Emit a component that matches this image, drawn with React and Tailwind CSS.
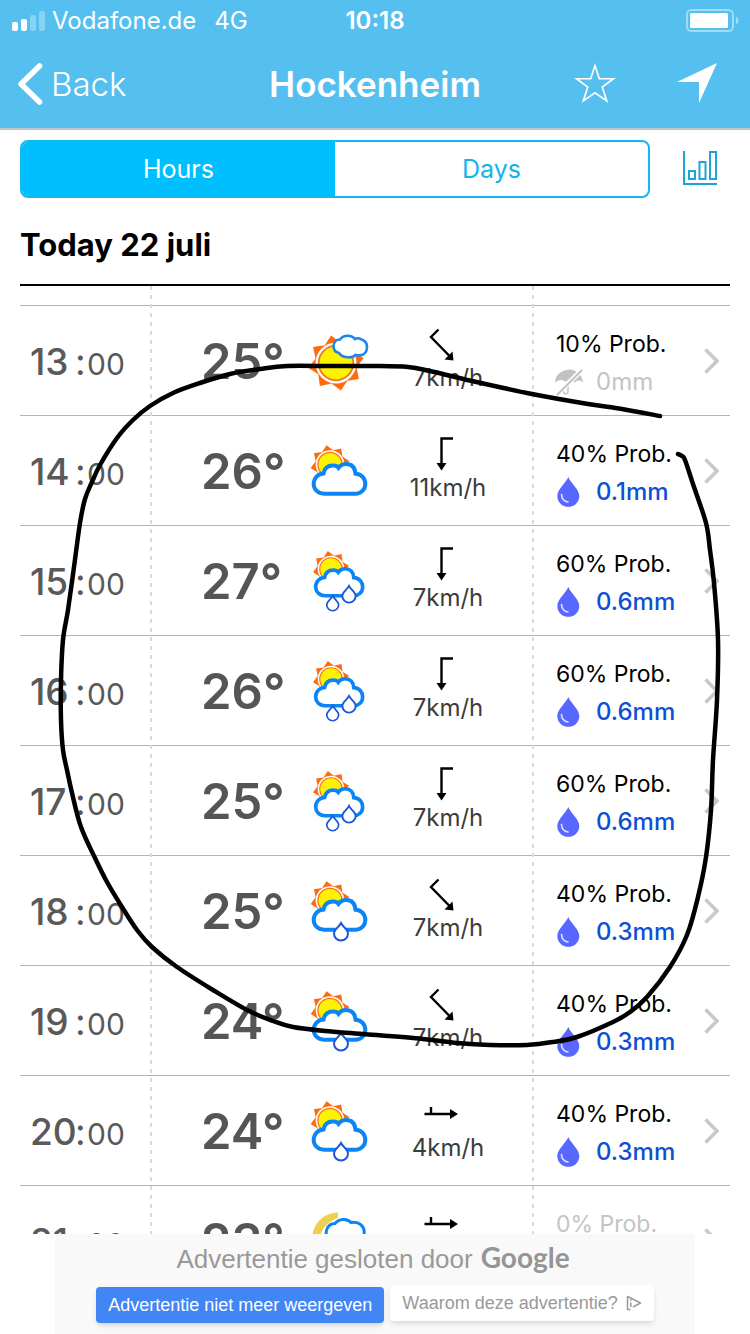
import React from "react";

const hours = [
  { hour: "13", temp: 25, sky: "sunny", wind: "southeast", speed: 7, prob: 10, rain: "0" },
  { hour: "14", temp: 26, sky: "cloudy", wind: "south", speed: 11, prob: 40, rain: "0.1" },
  { hour: "15", temp: 27, sky: "showers", wind: "south", speed: 7, prob: 60, rain: "0.6" },
  { hour: "16", temp: 26, sky: "showers", wind: "south", speed: 7, prob: 60, rain: "0.6" },
  { hour: "17", temp: 25, sky: "showers", wind: "south", speed: 7, prob: 60, rain: "0.6" },
  { hour: "18", temp: 25, sky: "drizzle", wind: "southeast", speed: 7, prob: 40, rain: "0.3" },
  { hour: "19", temp: 24, sky: "drizzle", wind: "southeast", speed: 7, prob: 40, rain: "0.3" },
  { hour: "20", temp: 24, sky: "drizzle", wind: "east", speed: 4, prob: 40, rain: "0.3" },
  { hour: "21", temp: 23, sky: "night", wind: "east", speed: 4, prob: 0, rain: "0" },
];

const markerPoints = [
  [660, 416], [622, 409], [588, 404], [532, 394], [472, 381], [430, 371], [408, 367], [375, 366],
  [330, 366], [287, 366], [260, 369], [230, 374], [200, 383], [173, 393], [150, 406], [133, 420],
  [117, 438], [100, 465], [92, 482], [85, 499], [80, 523], [74, 567], [68, 610], [63, 640],
  [61, 680], [61, 720], [63, 750], [67, 770], [72, 793], [81, 827], [95, 858],
  [107, 882], [122, 907], [137, 930], [152, 947], [177, 967], [213, 990], [247, 1010], [273, 1021],
  [293, 1027], [325, 1031], [363, 1034], [423, 1039], [457, 1043], [490, 1045], [527, 1045], [553, 1042],
  [577, 1037], [613, 1022], [630, 1012], [647, 997], [670, 967], [687, 935], [698, 897], [706, 857],
  [711, 810], [713, 760], [717, 700], [718, 640], [714, 583], [710, 550], [706, 523], [693, 484],
  [685, 460], [682, 456], [678, 454],
];

// Catmull-Rom spline through the points, written as cubic segments.
function smoothPath(points) {
  let d = `M${points[0].join(" ")}`;
  for (let i = 0; i < points.length - 1; i++) {
    const p0 = points[i - 1] || points[i];
    const p1 = points[i];
    const p2 = points[i + 1];
    const p3 = points[i + 2] || p2;
    const c = [0, 1].map((k) => p1[k] + (p2[k] - p0[k]) / 6);
    const e = [0, 1].map((k) => p2[k] - (p3[k] - p1[k]) / 6);
    d += `C${c.join(" ")} ${e.join(" ")} ${p2.join(" ")}`;
  }
  return d;
}

const sunRays = Array.from({ length: 16 }, (_, i) => {
  const angle = ((-100 + i * 22.5) * Math.PI) / 180;
  const radius = i % 2 ? 21 : 28;
  return `${(Math.cos(angle) * radius).toFixed(1)},${(Math.sin(angle) * radius).toFixed(1)}`;
}).join(" ");

function Sun({ transform }) {
  return (
    <g transform={transform}>
      <polygon points={sunRays} fill="#ff6a0a" />
      <circle r="20.5" fill="#fff" />
      <circle r="18.200" fill="#f5731a" />
      <circle r="16.400" fill="#fff200" />
    </g>
  );
}

function Cloud({ transform }) {
  return (
    <path
      transform={transform}
      d="M17 54.7C10.5 54.7 6.7 50 6.7 45C6.7 39 11 34.8 16.5 34.5C17.5 29 21 26.5 26 26.5C28.5 26.5 30.5 27.3 31.5 28.8C33.5 26 36.5 25 39 25C44.5 25 48 28.5 48.5 34.7C54.5 35 58.3 39.5 58.3 45C58.3 50.5 54 54.7 48.5 54.7Z"
      fill="#fff"
      stroke="#0b84f6"
      strokeWidth="4"
    />
  );
}

function RainDrop({ transform }) {
  return (
    <path
      transform={transform}
      d="M0 -9C2 -5 7 -2.5 7 1.5A7 7 0 0 1 -7 1.5C-7 -2.5 -2 -5 0 -9Z"
      fill="#fff"
      stroke="#1a56dc"
      strokeWidth="2"
    />
  );
}

function Sky({ kind }) {
  return (
    <svg viewBox="0 0 64 64" className="mx-auto block size-16" role="img" aria-label={kind}>
      {kind === "sunny" && (
        <>
          <Sun transform="translate(29 34)" />
          <path
            d="M32 24C28 23 26.5 20 26.5 17.5C26.5 13 29.5 10.5 33 10.5C35 7.5 38 6.7 41 6.7C44 6.7 46.5 8 48 10C50 9 52.5 9.2 54.5 10.5C58 11.5 60 14.5 60 18C60 22.5 57.5 26 53 26.3C51 26.7 49.5 26 48.5 25.8C46.5 28 44 28.5 41.5 28.3C37 28.3 34 27 32 24Z"
            fill="#fff"
            stroke="#1a86ee"
            strokeWidth="2.6"
          />
        </>
      )}
      {kind === "cloudy" && (
        <>
          <Sun transform="translate(23 25.5) scale(.7)" />
          <Cloud />
        </>
      )}
      {kind === "drizzle" && (
        <>
          <Sun transform="translate(23 21.5) scale(.7)" />
          <Cloud transform="translate(0 -4)" />
          <RainDrop transform="translate(34 53)" />
        </>
      )}
      {kind === "showers" && (
        <>
          <Sun transform="translate(24 20) scale(.65)" />
          <Cloud transform="translate(2.6 -3) scale(.91)" />
          <RainDrop transform="translate(42 45.5) scale(.95)" />
          <RainDrop transform="translate(25.7 54.5) scale(.85)" />
        </>
      )}
      {kind === "night" && (
        <>
          <path d="M31 3.5C16 3.5 5 16 5 31C5 43 14 53 26 55C17 48 13 40 13 31C13 21 20 13 31 9Z" fill="#efd04e" />
          <path
            d="M26 47C15 46 14 33 21 30C17 24 20 14.500 28 14.500C32 9.500 40 9 44 13.500C52 12 58.500 17 57 26C64 32 60 46 50 47Z"
            fill="#fff"
            stroke="#0b84f6"
            strokeWidth="3"
          />
        </>
      )}
    </svg>
  );
}

const windShapes = {
  south: { line: "M29 4.500H17.500V30", head: "M12.500 29H22.500L17.500 36.500Z" },
  southeast: { line: "M14.500 5.500L7 13L26 32.500", head: "M29.500 36.500L28.500 27.500L20.500 35.500Z" },
  east: { line: "M0.500 20H28M7 13V20", head: "M26 15L34 20L26 25Z" },
};

function WindArrow({ direction }) {
  const shape = windShapes[direction];
  return (
    <svg viewBox="0 0 48 40" className="mx-auto block h-10 w-12" role="img" aria-label={`Wind ${direction}`}>
      <path d={shape.line} fill="none" stroke="#000" strokeWidth="2.4" />
      <path d={shape.head} />
    </svg>
  );
}

function PrecipitationIcon({ dry }) {
  return dry ? (
    <svg viewBox="0 0 30 30" className="block size-[30px]" aria-hidden="true">
      <path d="M1 16C1 8 7.500 3 15 2.500C22 3 28.500 7.500 29 15.500C26 12.500 23 13 20.500 15.500C18 13 15 12.500 11.500 15C8 12 4 12.500 1 16Z" fill="#c2c2c2" />
      <path d="M14 14V24C14 28 9 27.500 9.500 24" fill="none" stroke="#c2c2c2" strokeWidth="1.500" />
      <path d="M2 28L29 2" stroke="#fff" strokeWidth="5" />
      <path d="M3 28L28 3" stroke="#c2c2c2" strokeWidth="2" />
    </svg>
  ) : (
    <svg viewBox="0 0 30 30" className="block size-[30px]" aria-hidden="true">
      <path d="M14.300 0C16.500 6 25.300 12 25.300 19A11 10.800 0 0 1 3.300 19C3.300 12 12 6 14.300 0Z" fill="#5867ff" />
      <path d="M7.500 17.500C7.800 22 10 24.500 14 25" fill="none" stroke="#dfe3ff" strokeWidth="1.600" strokeLinecap="round" />
    </svg>
  );
}

function HourRow({ item }) {
  const dry = item.rain === "0";
  return (
    <tr className="h-[110px] [&>*]:border-b [&>*]:border-[#b4b4b4] [&>*]:p-0">
      <th scope="row" className="text-left font-normal text-[#595959]">
        <div className="flex items-baseline pt-0.5 pl-2.5 text-[37px]">
          <span className="w-[45px] font-medium">{item.hour}</span>
          <span className="w-3">:</span>
          <span className="text-[30px]">00</span>
        </div>
      </th>
      <td className="text-[49px] font-semibold text-[#555]">
        <div className="pt-0.5 pl-[50px]">{item.temp}°</div>
      </td>
      <td>
        <Sky kind={item.sky} />
      </td>
      <td>
        <div className="pb-1.5 text-center text-2xl leading-7 text-[#3c3c3c]">
          <WindArrow direction={item.wind} />
          {item.speed}km/h
        </div>
      </td>
      <td>
        <div className="pt-1 pl-10">
          <div className={item.prob ? "pl-0.5 text-[23px] leading-[38px] whitespace-nowrap text-black" : "pl-0.5 text-[23px] leading-[38px] whitespace-nowrap text-[#c4c4c4]"}>
            {item.prob}% Prob.
          </div>
          <div className="flex h-[38px] items-center gap-3 text-2xl">
            <PrecipitationIcon dry={dry} />
            <span className={dry ? "text-[#c4c4c4]" : "font-medium text-[#0f4fd6]"}>{item.rain}mm</span>
          </div>
        </div>
      </td>
      <td>
        <a href={`#hour-${item.hour}`} aria-label={`Details ${item.hour}:00`} className="flex justify-end pr-2.5">
          <svg viewBox="0 0 16 26" className="h-[26px] w-4" fill="none" stroke="#c7c7cc" strokeWidth="3.500">
            <path d="M1.500 1.500L13 13L1.500 24.500" />
          </svg>
        </a>
      </td>
    </tr>
  );
}

function StatusBar() {
  return (
    <div className="grid h-10 grid-cols-[1fr_auto_1fr] items-center pt-px text-2xl">
      <div className="flex items-center pl-3">
        <svg viewBox="0 0 34 20" className="mr-1.5 h-5 w-[34px]" fill="#fff" aria-hidden="true">
          <rect x="0" y="11" width="6" height="9" rx="2" />
          <rect x="9" y="8" width="6" height="12" rx="2" />
          <rect x="18" y="4" width="6" height="16" rx="2" opacity=".3" />
          <rect x="27" y="0" width="6" height="20" rx="2" opacity=".3" />
        </svg>
        <span className="mr-[18px]">Vodafone.de</span>
        <span>4G</span>
      </div>
      <span className="font-semibold">10:18</span>
      <svg viewBox="0 0 54 24" className="mr-2.5 h-6 w-[54px] justify-self-end" fill="none" role="img" aria-label="Battery">
        <rect x="1" y="1" width="46" height="21" rx="4.500" stroke="#fff" strokeWidth="2" opacity=".45" />
        <rect x="4" y="4" width="38" height="15" rx="1.500" fill="#fff" />
        <path d="M50 7.500C53.500 9 53.500 14 50 15.500Z" fill="#fff" opacity=".45" />
      </svg>
    </div>
  );
}

function NavBar() {
  return (
    <div className="grid h-[88px] grid-cols-[1fr_auto_1fr] items-center">
      <button type="button" className="flex items-center gap-[7px] justify-self-start pl-4 text-[33px] leading-10 font-light">
        <svg viewBox="0 0 28 44" className="h-11 w-7" fill="none" stroke="#fff" strokeWidth="5.500" strokeLinecap="round" strokeLinejoin="round" aria-hidden="true">
          <path d="M23.500 4L5 22L23.500 40" />
        </svg>
        Back
      </button>
      <h1 className="text-[35px] leading-10 font-semibold">Hockenheim</h1>
      <div className="flex items-center justify-end gap-[60px] pr-8">
        <button type="button" aria-label="Favourite">
          <svg viewBox="0 0 42 42" className="block size-[42px]" fill="none" stroke="#fff" strokeWidth="1.600">
            <path d="M21 2.500L25.300 15.700H39.500L28.200 24L32.800 38L21 29.800L9.200 38L13.800 24L2.500 15.700H16.700Z" />
          </svg>
        </button>
        <button type="button" aria-label="Current location">
          <svg viewBox="0 0 42 42" className="block size-[42px]" fill="#fff">
            <path d="M41 0L23 40V19H1Z" />
          </svg>
        </button>
      </div>
    </div>
  );
}

function Advert() {
  return (
    <aside className="flex h-[100px] w-full max-w-[640px] shrink-0 flex-col items-center self-center bg-[#f9f9f9] pt-2 font-['Liberation_Sans',Arial,sans-serif]">
      <p className="flex items-baseline gap-2 pr-1 text-[26px] leading-[30px] text-[#999]">
        Advertentie gesloten door
        <span className="font-[Lato,sans-serif] text-[28px] font-bold text-[#959595]">Google</span>
      </p>
      <div className="mt-[11px] flex gap-1.5 text-lg leading-9">
        <button type="button" className="mt-0.5 h-9 rounded bg-[#4285f4] px-3 text-white shadow-md">
          Advertentie niet meer weergeven
        </button>
        <button type="button" className="flex h-9 items-center gap-2 rounded bg-white px-3 text-[#999] shadow-md">
          Waarom deze advertentie?
          <svg viewBox="0 0 16 16" className="size-4" fill="none" stroke="#999" strokeWidth="1.500" strokeLinejoin="round" aria-hidden="true">
            <path d="M4.500 14.500H1.500V1.500L14.500 8L7 12M4.800 7.500V12M4.800 4.500V6" />
          </svg>
        </button>
      </div>
    </aside>
  );
}

export default function App() {
  return (
    <div className="relative flex h-screen flex-col overflow-hidden bg-white font-[Inter,sans-serif] text-black">
      <header className="shrink-0 border-b-2 border-[#bcc8ce] bg-[#55c0ef] text-white">
        <StatusBar />
        <NavBar />
      </header>

      <div className="flex shrink-0 items-center gap-8 pt-2.5 pr-8 pl-5">
        <div className="flex h-[58px] flex-1 overflow-hidden rounded-lg border-2 border-[#12b9f0] text-[25px]">
          <button type="button" aria-pressed="true" className="flex-1 bg-[#00bfff] pt-0.5 text-white">
            Hours
          </button>
          <button type="button" aria-pressed="false" className="flex-1 pt-0.5 text-[#12b5ea]">
            Days
          </button>
        </div>
        <button type="button" aria-label="Chart">
          <svg viewBox="0 0 36 36" className="block size-9" fill="none" stroke="#1ba6d6" strokeWidth="2">
            <path d="M2 0V33H35" />
            <rect x="7" y="20" width="6" height="8" />
            <rect x="17.500" y="11" width="6" height="17" />
            <rect x="28" y="1" width="6" height="27" />
          </svg>
        </button>
      </div>

      <main className="mx-5 flex min-h-0 flex-1 flex-col">
        <h2 className="shrink-0 border-b-2 border-black pt-[27px] pb-[19px] text-[31px] leading-10 font-bold">Today 22 juli</h2>
        <div className="relative min-h-0 flex-1 overflow-hidden">
          <span className="absolute inset-y-0 left-[130px] w-0.5 bg-[repeating-linear-gradient(to_bottom,#dadada_0_4px,transparent_4px_9px)]" />
          <span className="absolute inset-y-0 right-[196px] w-0.5 bg-[repeating-linear-gradient(to_bottom,#dadada_0_4px,transparent_4px_9px)]" />
          <table className="w-full table-fixed border-separate border-spacing-0">
            <colgroup>
              <col className="w-[131px]" />
              <col className="w-[145px]" />
              <col className="w-[86px]" />
              <col className="w-[132px]" />
              <col />
              <col className="w-10" />
            </colgroup>
            <tbody>
              <tr className="h-5">
                <td colSpan={6} className="border-b border-[#b4b4b4] p-0" />
              </tr>
              {hours.map((item) => (
                <HourRow key={item.hour} item={item} />
              ))}
            </tbody>
          </table>
        </div>
      </main>

      <Advert />

      <svg
        viewBox="0 0 750 1334"
        className="pointer-events-none absolute inset-0 size-full"
        fill="none"
        stroke="#000"
        strokeWidth="4.500"
        strokeLinecap="round"
        strokeLinejoin="round"
        aria-hidden="true"
      >
        <path d={smoothPath(markerPoints)} />
      </svg>
    </div>
  );
}
